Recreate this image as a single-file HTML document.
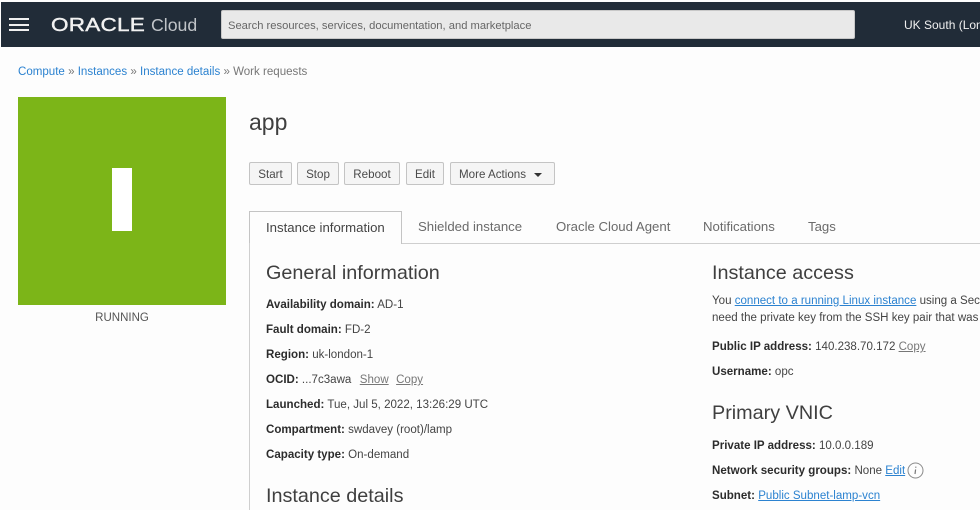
<!DOCTYPE html>
<html lang="en">
<head>
<meta charset="utf-8">
<title>Instance details</title>
<style>
html,body{margin:0;padding:0;width:980px;height:510px;overflow:hidden;background:#fdfdfd;font-family:"Liberation Sans",Arial,sans-serif;color:#3a3a3a;}
#p{position:relative;width:980px;height:510px;overflow:hidden;}
.a{position:absolute;white-space:nowrap;}
.c{right:0;overflow:hidden;}
a{color:#2b82d0;text-decoration:none;}
.u{text-decoration:underline;}
.g{color:#777;text-decoration:underline;}
.r{font-size:11.55px;line-height:14px;color:#444;}
.r b{color:#2c2c2c;}
h2{position:absolute;margin:0;font-weight:400;font-size:19.8px;line-height:24px;color:#3f3f3f;white-space:nowrap;}
.btn{position:absolute;top:162px;height:23px;box-sizing:border-box;border:1px solid #c4c4c4;border-radius:2px;background:#f5f5f5;font-size:11.6px;line-height:23px;text-align:center;color:#4a4a4a;}
.tab{position:absolute;top:219px;font-size:13.2px;line-height:16px;color:#6b6b6b;white-space:nowrap;}
</style>
</head>
<body>
<div id="p">
<div class="a" style="left:1px;top:2px;width:979px;height:45px;background:#212c38;"></div>
<div class="a" style="left:9px;top:18px;width:20px;height:2px;background:#f0f0f0;"></div>
<div class="a" style="left:9px;top:24px;width:20px;height:2px;background:#f0f0f0;"></div>
<div class="a" style="left:9px;top:29px;width:20px;height:2px;background:#f0f0f0;"></div>
<div class="a" style="left:51px;top:14px;font-size:18px;line-height:22px;color:#f2f2f2;transform-origin:0 50%;transform:scaleX(1.25);letter-spacing:.2px;-webkit-text-stroke:.4px #f2f2f2;">ORACLE</div>
<div class="a" style="left:151px;top:14px;font-size:17.7px;line-height:22px;color:#c0c4c8;">Cloud</div>
<div class="a" style="left:221px;top:10px;width:634px;height:29px;box-sizing:border-box;background:#e9e9e9;border-radius:2px;border:1px solid #c8c8c8;"></div>
<div class="a" style="left:228px;top:19px;font-size:11.2px;line-height:14px;color:#666;">Search resources, services, documentation, and marketplace</div>
<div class="a c" style="left:904px;top:18px;font-size:12px;line-height:15px;color:#f0f0f0;">UK South (London)</div>

<div class="a" style="left:18px;top:65px;font-size:11.55px;line-height:14px;color:#777;"><a>Compute</a> » <a>Instances</a> » <a>Instance details</a> » Work requests</div>

<div class="a" style="left:18px;top:97px;width:208px;height:208px;background:#7cb518;"></div>
<div class="a" style="left:112px;top:168px;width:20px;height:63px;background:#fff;"></div>
<div class="a" style="left:18px;top:311px;width:208px;text-align:center;font-size:11.5px;line-height:14px;color:#555;">RUNNING</div>

<div class="a" style="left:249px;top:108px;font-size:23px;line-height:28px;color:#3f3f3f;">app</div>

<div class="btn" style="left:249px;width:43px;">Start</div>
<div class="btn" style="left:297px;width:42px;">Stop</div>
<div class="btn" style="left:344px;width:56px;">Reboot</div>
<div class="btn" style="left:406px;width:38px;">Edit</div>
<div class="btn" style="left:450px;width:105px;text-align:left;padding-left:8px;">More Actions</div>
<div class="a" style="left:534px;top:173px;width:0;height:0;border-left:4px solid transparent;border-right:4px solid transparent;border-top:4px solid #333;"></div>

<div class="a" style="left:402px;top:243px;width:578px;height:1px;background:#cfcfcf;"></div>
<div class="a" style="left:249px;top:211px;width:153px;height:33px;box-sizing:border-box;border:1px solid #c4c4c4;border-bottom:0;background:#fdfdfd;"></div>
<div class="a" style="left:249px;top:243px;width:1px;height:267px;background:#cfcfcf;"></div>
<div class="tab" style="left:266px;top:220px;color:#444;">Instance information</div>
<div class="tab" style="left:418px;">Shielded instance</div>
<div class="tab" style="left:556px;">Oracle Cloud Agent</div>
<div class="tab" style="left:703px;">Notifications</div>
<div class="tab" style="left:808px;">Tags</div>

<h2 style="left:266px;top:261px;">General information</h2>
<div class="a r" style="left:266px;top:298px;"><b>Availability domain:</b> AD-1</div>
<div class="a r" style="left:266px;top:323px;"><b>Fault domain:</b> FD-2</div>
<div class="a r" style="left:266px;top:348px;"><b>Region:</b> uk-london-1</div>
<div class="a r" style="left:266px;top:373px;"><b>OCID:</b> ...7c3awa &nbsp;<span class="g" style="margin-left:2px;">Show</span> &nbsp;<span class="g" style="margin-left:1px;">Copy</span></div>
<div class="a r" style="left:266px;top:398px;"><b>Launched:</b> Tue, Jul 5, 2022, 13:26:29 UTC</div>
<div class="a r" style="left:266px;top:423px;"><b>Compartment:</b> swdavey (root)/lamp</div>
<div class="a r" style="left:266px;top:448px;"><b>Capacity type:</b> On-demand</div>
<h2 style="left:266px;top:484px;">Instance details</h2>

<h2 style="left:712px;top:261px;">Instance access</h2>
<div class="a r c" style="left:712px;top:294px;">You <a class="u">connect to a running Linux instance</a> using a Secure Shell (SSH) connection. You'll</div>
<div class="a r c" style="left:712px;top:311px;">need the private key from the SSH key pair that was used to create the instance.</div>
<div class="a r" style="left:712px;top:340px;"><b>Public IP address:</b> 140.238.70.172 <span class="g">Copy</span></div>
<div class="a r" style="left:712px;top:365px;"><b>Username:</b> opc</div>
<h2 style="left:712px;top:401px;">Primary VNIC</h2>
<div class="a r" style="left:712px;top:439px;"><b>Private IP address:</b> 10.0.0.189</div>
<div class="a r" style="left:712px;top:464px;"><b>Network security groups:</b> None <a class="u">Edit</a></div>
<svg class="a" style="left:907px;top:462px;" width="17" height="17" viewBox="0 0 17 17"><circle cx="8.5" cy="8.5" r="7.5" fill="none" stroke="#8a8a8a" stroke-width="1"/><path d="M8.8 4.6v1.2M8.6 7.4l-.6 4.6" fill="none" stroke="#777" stroke-width="1.2"/></svg>
<div class="a r" style="left:712px;top:489px;"><b>Subnet:</b> <a class="u">Public Subnet-lamp-vcn</a></div>
</div>
</body>
</html>
